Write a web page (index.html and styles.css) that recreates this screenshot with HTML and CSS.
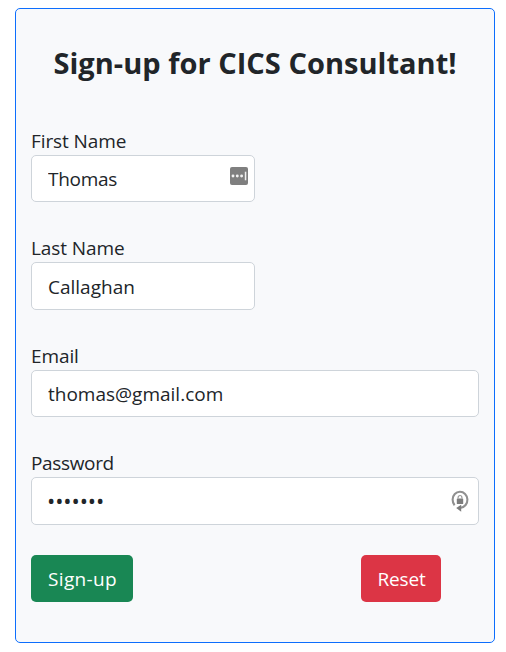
FILE: index.html
```html
<!DOCTYPE html>
<html lang="en">
<head>
<meta charset="utf-8">
<title>Sign-up</title>
<link rel="stylesheet" href="styles.css">
</head>
<body>
<form class="card">
  <h1 class="title">Sign-up for CICS Consultant!</h1>
  <div class="field half">
    <label class="label" for="first">First Name</label>
    <div class="control">
      <input class="input first" id="first" type="text" value="Thomas">
      <svg class="badge" width="18" height="18" viewBox="0 0 18 18"><rect width="18" height="18" rx="2" fill="#7f7f7f"/><g fill="#f2f2f2"><circle cx="3" cy="9" r="1.45"/><circle cx="7.3" cy="9" r="1.45"/><circle cx="11.6" cy="9" r="1.45"/><rect x="14.8" y="4.7" width="1.5" height="8.6"/></g></svg>
    </div>
  </div>
  <div class="field half">
    <label class="label" for="last">Last Name</label>
    <div class="control"><input class="input last" id="last" type="text" value="Callaghan"></div>
  </div>
  <div class="field">
    <label class="label" for="email">Email</label>
    <div class="control"><input class="input email" id="email" type="email" value="thomas@gmail.com"></div>
  </div>
  <div class="field">
    <label class="label password-label" for="password">Password</label>
    <div class="control">
      <input class="input password" id="password" type="password" value="1234567">
      <svg class="lock" width="18" height="22" viewBox="0 0 18 22"><path d="M3.6 15.2A7.4 8 0 1 1 14.6 15Q12.8 17.4 9 18" fill="none" stroke="#909090" stroke-width="2.1"/><path d="M10.2 14.8v7L5.2 18z" fill="#7c7c7c"/><rect x="5.8" y="8.4" width="6.4" height="5.6" rx=".5" fill="#7c7c7c"/><path d="M7.1 8.6V7.4a1.9 1.9 0 0 1 3.8 0v1.2" fill="none" stroke="#999" stroke-width="1.2"/></svg>
    </div>
  </div>
  <div class="actions">
    <button class="btn signup" type="button">Sign-up</button>
    <button class="btn reset" type="reset">Reset</button>
  </div>
</form>
</body>
</html>
```

FILE: styles.css
```css
* { box-sizing: border-box; }
body {
  margin: 0;
  padding: 8px 11px 0 15px;
  background: #fff;
  color: #212529;
  font-family: "Open Sans", "Noto Sans", sans-serif;
  font-size: 19px;
  letter-spacing: -0.1px;
}
.card {
  width: 480px;
  height: 635px;
  padding: 0 15px;
  border: 1px solid #0d6efd;
  border-radius: 5px;
  background: #f8f9fb;
}
.title {
  margin: 0;
  padding-top: 35px;
  height: 117px;
  font-size: 29px;
  line-height: 38px;
  font-weight: 700;
  letter-spacing: 0.03px;
  text-align: center;
  white-space: nowrap;
}
.field { height: 107.4px; }
.half { width: 224px; }
.label {
  display: block;
  height: 29px;
  line-height: 31px;
  white-space: nowrap;
}
.password-label { letter-spacing: -0.35px; }
.control { position: relative; }
.input {
  display: block;
  width: 100%;
  height: 47.5px;
  padding: 0 16px;
  border: 1px solid #ced4da;
  border-radius: 5px;
  background: #fff;
  color: #212529;
  font: inherit;
}
.first {
  height: 47px;
  letter-spacing: -0.3px;
}
.last { padding-top: 1px; }
.email { letter-spacing: 0; }
.password {
  padding: 0 15px 1px;
  font-size: 22px;
  letter-spacing: -0.1px;
}
.badge { position: absolute; top: 12px; right: 7px; }
.lock { position: absolute; top: 13px; right: 10px; }
.actions {
  display: flex;
  justify-content: space-between;
  margin-top: -0.6px;
  padding-right: 38px;
}
.btn {
  height: 47px;
  margin: 0;
  padding: 2px 0 0 1px;
  border: 0;
  border-radius: 5px;
  color: #fff;
  font: inherit;
}
.signup { width: 102px; background: #198754; letter-spacing: 0.35px; }
.reset { width: 80px; background: #dc3545; letter-spacing: -0.15px; }
```
